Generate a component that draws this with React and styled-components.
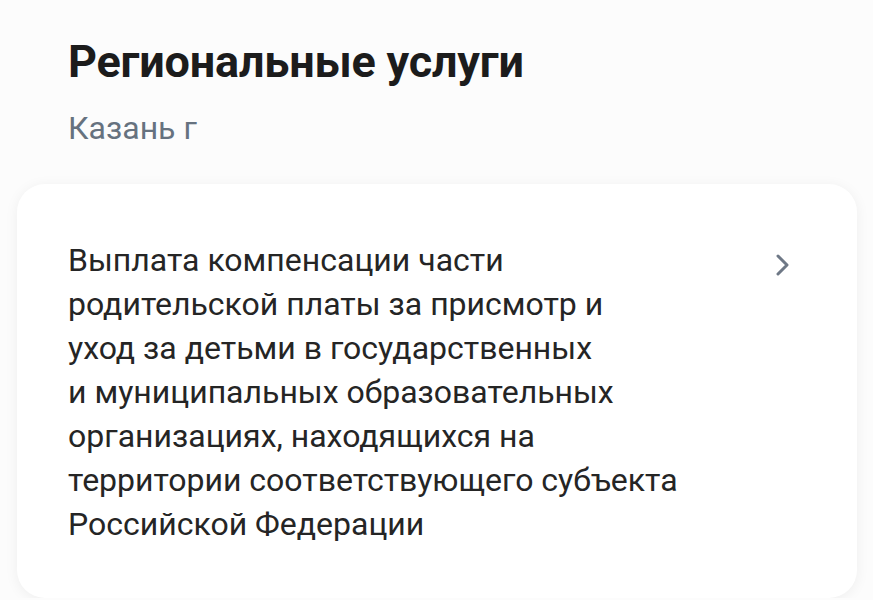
import React from "react";
import styled, { createGlobalStyle } from "styled-components";

const GlobalStyle = createGlobalStyle`
  html, body {
    margin: 0;
    padding: 0;
    background: #fcfcfc;
    font-family: Roboto, "Noto Sans", sans-serif;
    -webkit-font-smoothing: antialiased;
  }
`;

const Page = styled.div`
  display: flex;
  flex-direction: column;
  padding: 36px 17px 0 17px;
  width: 840px;
`;

const Title = styled.h1`
  margin: 0 0 0 51px;
  font-size: 45px;
  line-height: 52px;
  font-weight: 700;
  color: #1c1c1c;
  letter-spacing: -0.2px;
`;

const Region = styled.div`
  margin: 20px 0 0 51px;
  font-size: 32px;
  line-height: 40px;
  color: #66727f;
`;

const Card = styled.div`
  margin-top: 36px;
  background: #ffffff;
  border-radius: 28px;
  box-shadow: 0 2px 14px rgba(0, 0, 0, 0.06);
  padding: 54px 51px 52px 51px;
  display: flex;
  justify-content: space-between;
  align-items: flex-start;
`;

const ServiceText = styled.div`
  font-size: 32px;
  line-height: 44px;
  color: #252525;
`;

const Line = styled.span`
  display: block;
`;

const Chevron = styled.svg`
  width: 22px;
  height: 26px;
  margin: 14px 13px 0 0;
  flex-shrink: 0;
`;

const lines = [
  "Выплата компенсации части",
  "родительской платы за присмотр и",
  "уход за детьми в государственных",
  "и муниципальных образовательных",
  "организациях, находящихся на",
  "территории соответствующего субъекта",
  "Российской Федерации",
];

export default function App() {
  return (
    <>
      <GlobalStyle />
      <Page>
        <Title>Региональные услуги</Title>
        <Region>Казань г</Region>
        <Card>
          <ServiceText>
            {lines.map((l) => (
              <Line key={l}>{l}</Line>
            ))}
          </ServiceText>
          <Chevron viewBox="0 0 22 26" fill="none">
            <path
              d="M7 4 L16 13 L7 22"
              stroke="#6e7886"
              strokeWidth="3"
              strokeLinecap="round"
              strokeLinejoin="round"
            />
          </Chevron>
        </Card>
      </Page>
    </>
  );
}
